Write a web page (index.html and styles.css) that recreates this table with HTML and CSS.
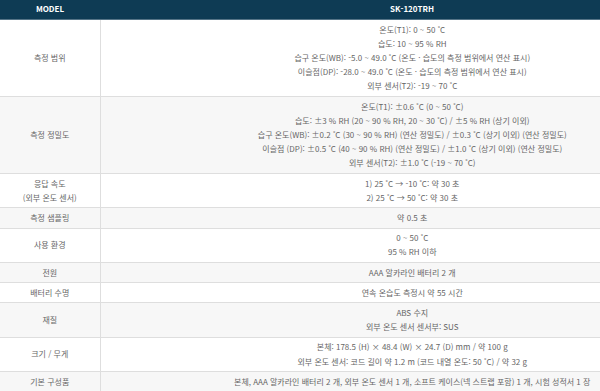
FILE: index.html
```html
<!DOCTYPE html>
<html lang="ko">
<head>
<meta charset="utf-8">
<link rel="stylesheet" href="styles.css">
</head>
<body>
<table class="spec">
  <colgroup><col class="c-label"><col class="c-value"></colgroup>
  <thead>
    <tr><th>MODEL</th><th>SK-120TRH</th></tr>
  </thead>
  <tbody>
    <tr>
      <td class="label">측정 범위</td>
      <td>온도(T1): 0 ~ 50 ˚C<br>습도: 10 ~ 95 % RH<br>습구 온도(WB): -5.0 ~ 49.0 ˚C (온도 · 습도의 측정 범위에서 연산 표시)<br>이슬점(DP): -28.0 ~ 49.0 ˚C (온도 · 습도의 측정 범위에서 연산 표시)<br>외부 센서(T2): -19 ~ 70 ˚C</td>
    </tr>
    <tr class="alt">
      <td class="label">측정 정밀도</td>
      <td>온도(T1): ±0.6 ˚C (0 ~ 50 ˚C)<br>습도: ±3 % RH (20 ~ 90 % RH, 20 ~ 30 ˚C) / ±5 % RH (상기 이외)<br>습구 온도(WB): ±0.2 ˚C (30 ~ 90 % RH) (연산 정밀도) / ±0.3 ˚C (상기 이외) (연산 정밀도)<br>이슬점 (DP): ±0.5 ˚C (40 ~ 90 % RH) (연산 정밀도) / ±1.0 ˚C (상기 이외) (연산 정밀도)<br>외부 센서(T2): ±1.0 ˚C (-19 ~ 70 ˚C)</td>
    </tr>
    <tr>
      <td class="label">응답 속도<br>(외부 온도 센서)</td>
      <td>1) 25 ˚C → -10 ˚C: 약 30 초<br>2) 25 ˚C → 50 ˚C: 약 30 초</td>
    </tr>
    <tr class="alt">
      <td class="label">측정 샘플링</td>
      <td>약 0.5 초</td>
    </tr>
    <tr>
      <td class="label">사용 환경</td>
      <td>0 ~ 50 ˚C<br>95 % RH 이하</td>
    </tr>
    <tr class="alt">
      <td class="label">전원</td>
      <td>AAA 알카라인 배터리 2 개</td>
    </tr>
    <tr>
      <td class="label">배터리 수명</td>
      <td>연속 온습도 측정시 약 55 시간</td>
    </tr>
    <tr class="alt">
      <td class="label">재질</td>
      <td>ABS 수지<br>외부 온도 센서 센서부: SUS</td>
    </tr>
    <tr>
      <td class="label">크기 / 무게</td>
      <td>본체: 178.5 (H) × 48.4 (W) × 24.7 (D) mm / 약 100 g<br>외부 온도 센서: 코드 길이 약 1.2 m (코드 내열 온도: 50 ˚C) / 약 32 g</td>
    </tr>
    <tr class="alt">
      <td class="label">기본 구성품</td>
      <td>본체, AAA 알카라인 배터리 2 개, 외부 온도 센서 1 개, 소프트 케이스(넥 스트랩 포함) 1 개, 시험 성적서 1 장</td>
    </tr>
  </tbody>
</table>
</body>
</html>
```
FILE: styles.css
```css
html, body {
  margin: 0;
  padding: 0;
  background: #ffffff;
  overflow: hidden;
}
.spec {
  width: 724px;
  border-collapse: collapse;
  table-layout: fixed;
  font-family: "Noto Sans CJK KR", "Noto Sans", sans-serif;
  font-size: 8px;
  line-height: 14.2px;
  color: #666666;
  text-align: center;
}
.c-label { width: 100px; }
.spec th {
  background: #0e3b54;
  color: #ffffff;
  font-weight: 700;
  height: 19px;
  padding: 0;
  border-bottom: 1px solid #557487;
}
.spec td {
  padding: 2.5px 4px;
  border-bottom: 1px solid #dedede;
  vertical-align: middle;
}
.spec td.label {
  border-right: 1px solid #dedede;
}
.spec tr.alt td {
  background: #f7f7f7;
}
```
